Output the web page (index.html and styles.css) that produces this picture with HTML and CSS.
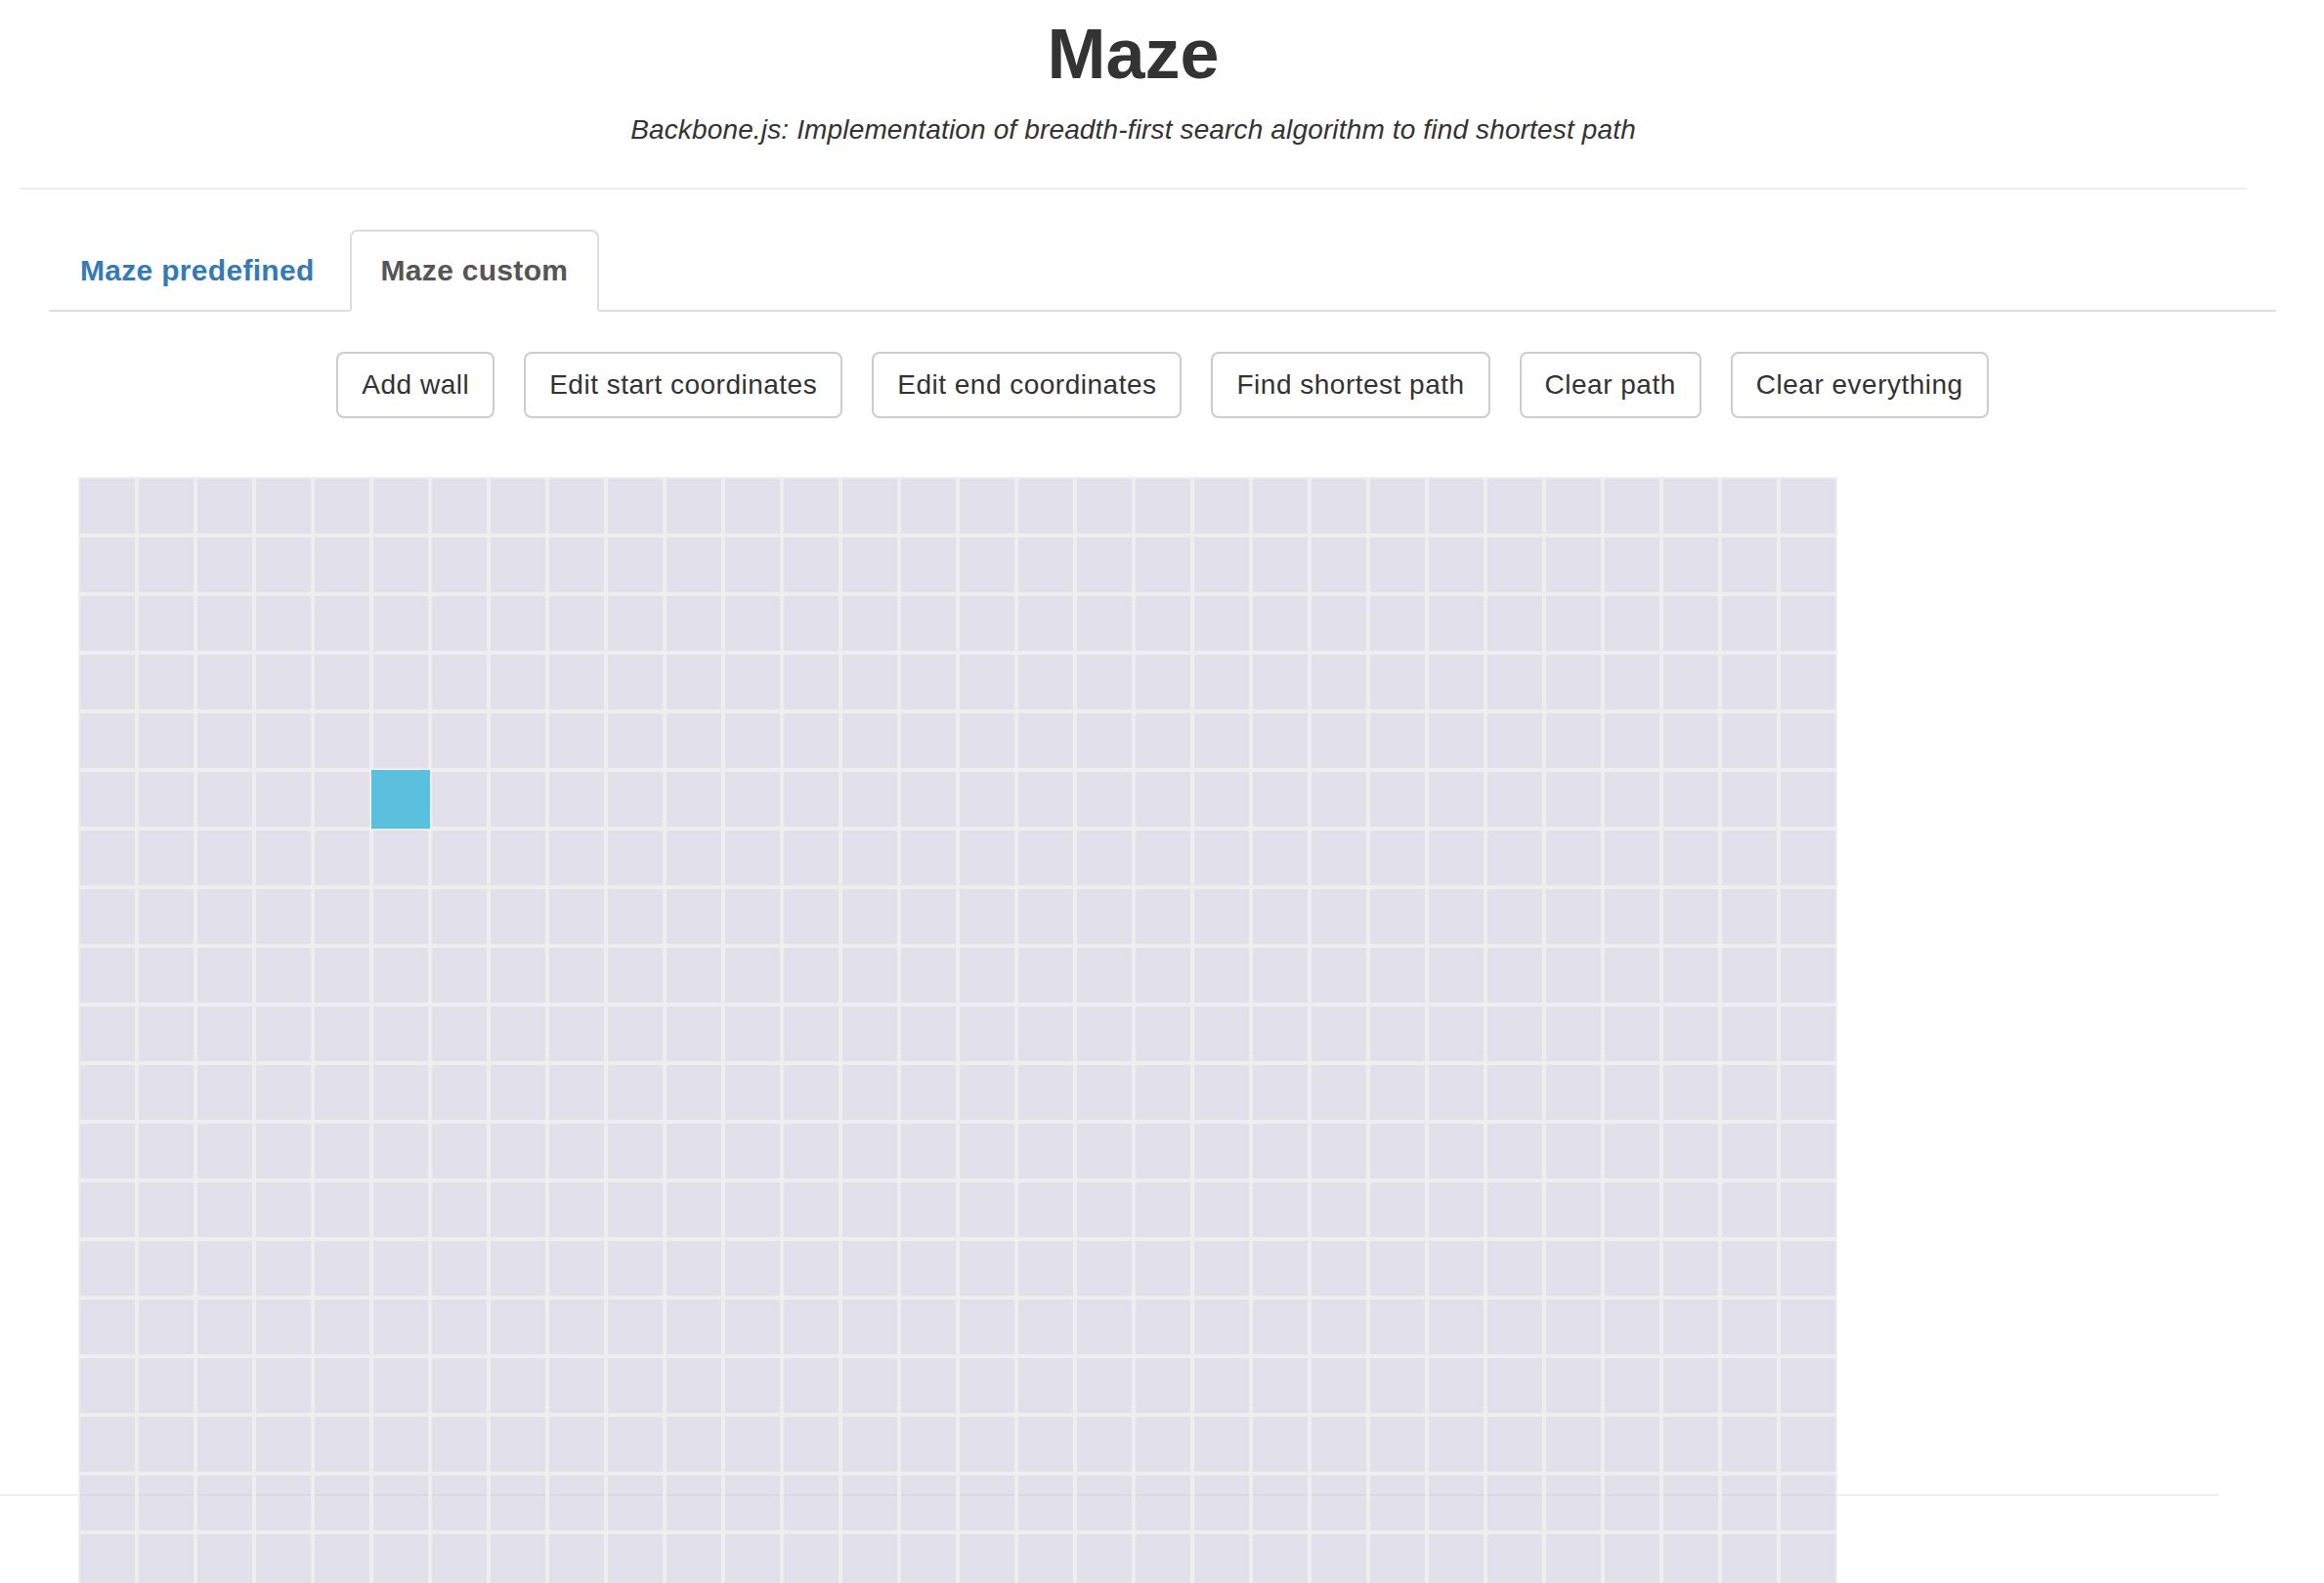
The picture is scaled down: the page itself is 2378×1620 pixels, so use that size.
FILE: index.html
```html
<!DOCTYPE html>
<html lang="en">
<head>
<meta charset="utf-8">
<title>Maze</title>
<link rel="stylesheet" href="styles.css">
</head>
<body>
<div class="page">
  <header class="header">
    <h1 class="title">Maze</h1>
    <p class="subtitle"><em>Backbone.js: Implementation of breadth-first search algorithm to find shortest path</em></p>
    <hr class="header-rule">
  </header>
  <main class="content">
    <ul class="tabs">
      <li class="tab"><a class="tab-link" href="#predefined">Maze predefined</a></li>
      <li class="tab tab-active"><a class="tab-link" href="#custom">Maze custom</a></li>
    </ul>
    <div class="toolbar">
      <button class="btn" type="button">Add wall</button>
      <button class="btn" type="button">Edit start coordinates</button>
      <button class="btn" type="button">Edit end coordinates</button>
      <button class="btn" type="button">Find shortest path</button>
      <button class="btn" type="button">Clear path</button>
      <button class="btn" type="button">Clear everything</button>
    </div>
    <div class="maze-area">
      <div class="maze" id="maze"></div>
    </div>
  </main>
  <hr class="footer-rule">
</div>
<script src="app.js"></script>
</body>
</html>
```
FILE: styles.css
```css
body {
  margin: 0;
  padding: 0;
  background: #fff;
  font-family: "Liberation Sans", Arial, Helvetica, sans-serif;
  color: #333;
  font-size: 28px;
  line-height: 40px;
}
.page {
  height: 1620px;
  overflow: hidden;
}
.header {
  width: 2279px;
  margin-left: 20px;
  text-align: center;
}
.title {
  margin: 0;
  padding-top: 15px;
  font-size: 72px;
  line-height: 80px;
  font-weight: bold;
  color: #333;
}
.subtitle {
  margin: 18px 0 0;
  font-size: 28px;
  line-height: 40px;
  letter-spacing: 0.15px;
}
.header-rule {
  margin: 39px 0 0;
  border: 0;
  border-top: 2px solid #eee;
  height: 0;
}
.content {
  width: 2279px;
  margin-left: 50px;
}
.tabs {
  list-style: none;
  margin: 41px 0 0;
  padding: 0;
  display: flex;
  border-bottom: 2px solid #ddd;
}
.tab {
  margin-right: 4px;
  margin-bottom: -2px;
}
.tab-link {
  display: block;
  padding: 20px 30px;
  border: 2px solid transparent;
  border-radius: 8px 8px 0 0;
  font-size: 30px;
  line-height: 40px;
  font-weight: bold;
  letter-spacing: 0.3px;
  color: #337ab7;
  text-decoration: none;
}
.tab-active .tab-link {
  color: #555;
  background: #fff;
  border-color: #ddd #ddd transparent;
}
.toolbar {
  display: flex;
  justify-content: center;
  gap: 30px;
  margin-top: 41px;
}
.btn {
  font-family: "Liberation Sans", Arial, Helvetica, sans-serif;
  font-size: 28px;
  line-height: 40px;
  letter-spacing: 0.5px;
  padding: 12px 24px;
  color: #333;
  background: #fff;
  border: 2px solid #ccc;
  border-radius: 8px;
  margin: 0;
}
.maze-area {
  margin-top: 60px;
  height: 1041px;
  padding-left: 30px;
}
.maze {
  position: relative;
  display: grid;
  grid-template-columns: repeat(30, 60px);
  grid-auto-rows: 60px;
  width: max-content;
}
.cell {
  box-sizing: border-box;
  border: 2px solid #eee;
  background: rgba(197, 193, 215, 0.5);
}
.cell-start {
  background: #5bc0de;
  border-color: #5bc0de;
}
.footer-rule {
  margin: 0 108px 0 0;
  border: 0;
  border-top: 2px solid #eee;
  height: 0;
}
```
FILE: app.js
```js
(function () {
  var maze = document.getElementById('maze');
  var cols = 30, rows = 20;
  var start = { x: 5, y: 5 };
  for (var y = 0; y < rows; y++) {
    for (var x = 0; x < cols; x++) {
      var cell = document.createElement('div');
      cell.className = 'cell';
      if (x === start.x && y === start.y) cell.className += ' cell-start';
      maze.appendChild(cell);
    }
  }
})();
```
